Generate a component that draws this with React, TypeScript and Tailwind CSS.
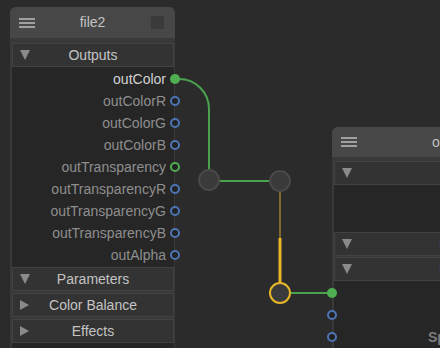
import React from 'react';

const font = { fontFamily: '"Liberation Sans", Arial, sans-serif' };

type Port = { name: string; kind: 'filled' | 'ring'; color: 'green' | 'blue'; bright?: boolean };

const outputs: Port[] = [
    { name: 'outColor', kind: 'filled', color: 'green', bright: true },
    { name: 'outColorR', kind: 'ring', color: 'blue' },
    { name: 'outColorG', kind: 'ring', color: 'blue' },
    { name: 'outColorB', kind: 'ring', color: 'blue' },
    { name: 'outTransparency', kind: 'ring', color: 'green' },
    { name: 'outTransparencyR', kind: 'ring', color: 'blue' },
    { name: 'outTransparencyG', kind: 'ring', color: 'blue' },
    { name: 'outTransparencyB', kind: 'ring', color: 'blue' },
    { name: 'outAlpha', kind: 'ring', color: 'blue' },
];

const Dot: React.FC<{ port: Port; className: string }> = ({ port, className }) => {
    const ring = port.color === 'green' ? 'border-[#4fae52]' : 'border-[#4d74b4]';
    const fill = port.color === 'green' ? 'bg-[#4fae52]' : 'bg-[#4d74b4]';
    return (
        <span
            className={`absolute top-1/2 -translate-y-1/2 w-[10px] h-[10px] rounded-full ${className} ${port.kind === 'filled' ? fill : `border-2 ${ring} bg-[#222]`}`}
        />
    );
};

const Hamburger = () => (
    <div className="flex flex-col gap-[2px] w-[16px]">
        <span className="h-[2px] bg-[#a0a0a0]" />
        <span className="h-[2px] bg-[#a0a0a0]" />
        <span className="h-[2px] bg-[#a0a0a0]" />
    </div>
);

const Down = () => (
    <span className="w-0 h-0 border-l-[5px] border-r-[5px] border-t-[10px] border-l-transparent border-r-transparent border-t-[#8a8a8a]" />
);

const Right = () => (
    <span className="w-0 h-0 border-t-[5px] border-b-[5px] border-l-[9px] border-t-transparent border-b-transparent border-l-[#8a8a8a]" />
);

const Section: React.FC<{ label?: string; open?: boolean; center?: boolean; labelLeft?: number; top?: string }> = ({ label, open = true, center = true, labelLeft, top = '' }) => (
    <div className={`relative h-[24px] ${top} flex items-center pl-[7px] bg-[#333333] border border-[#424242] text-[14px] text-[#c4c4c4]`}>
        {open ? <Down /> : <Right />}
        {center && label && <span className="absolute inset-0 flex items-center justify-center">{label}</span>}
        {!center && label && (
            <span className="absolute top-0 bottom-0 flex items-center" style={{ left: labelLeft }}>
                {label}
            </span>
        )}
    </div>
);

export default function App() {
    return (
        <div className="relative w-[440px] h-[348px] overflow-hidden bg-[#2b2b2b]" style={font}>
            <svg className="absolute inset-0" width="440" height="348">
                <path d="M174 79 H179 A30 30 0 0 1 209 109 V170" fill="none" stroke="#4aa24f" strokeWidth="2" />
                <line x1="219" y1="181" x2="270" y2="181" stroke="#4aa24f" strokeWidth="2" />
                <line x1="280" y1="191" x2="280" y2="238" stroke="#7d6a33" strokeWidth="2" />
                <line x1="280" y1="238" x2="280" y2="283" stroke="#e6b52a" strokeWidth="3" />
                <line x1="291" y1="293" x2="333" y2="293" stroke="#4aa24f" strokeWidth="2" />
                <circle cx="209" cy="180" r="10" fill="#3a3a3a" stroke="#484848" strokeWidth="2" />
                <circle cx="280" cy="181" r="10" fill="#3a3a3a" stroke="#484848" strokeWidth="2" />
                <circle cx="280" cy="293" r="10" fill="#3a3a3a" stroke="#e6b52a" strokeWidth="2" />
            </svg>

            {/* node 1 */}
            <div className="absolute left-[10px] top-[7px] w-[165px] h-[360px] rounded-t-[6px] bg-[#393939] flex flex-col">
                <div className="h-[31px] shrink-0 rounded-t-[6px] bg-[#474747] flex items-center px-[9px] relative">
                    <Hamburger />
                    <span className="absolute inset-0 flex items-center justify-center text-[14px] text-[#c2c2c2]">file2</span>
                    <span className="ml-auto w-[13px] h-[13px] bg-[#3a3a3a] mr-[2px]" />
                </div>
                <div className="flex-1 flex flex-col pt-[5px] px-[2px] pr-px">
                    <Section label="Outputs" />
                    <div className="bg-[#262626] flex flex-col pt-[1px] pb-[1px]">
                        {outputs.map((p) => (
                            <div key={p.name} className="relative h-[22px] flex items-center justify-end pr-[8px] text-[14px]">
                                <span className={p.bright ? 'text-[#d2d2d2]' : 'text-[#8e8e8e]'}>{p.name}</span>
                                <Dot port={p} className="right-[-6px]" />
                            </div>
                        ))}
                    </div>
                    <Section label="Parameters" />
                    <Section label="Color Balance" open={false} top="mt-[2px]" />
                    <Section label="Effects" open={false} top="mt-[2px]" />
                    <div className="flex-1 bg-[#262626]" />
                </div>
            </div>

            {/* node 2 */}
            <div className="absolute left-[332px] top-[127px] w-[200px] h-[240px] rounded-tl-[6px] bg-[#393939] flex flex-col">
                <div className="h-[30px] shrink-0 rounded-tl-[6px] bg-[#474747] flex items-center px-[9px] relative">
                    <Hamburger />
                    <span className="absolute top-0 bottom-0 left-[100px] flex items-center text-[14px] text-[#c2c2c2]">output</span>
                </div>
                <div className="flex-1 flex flex-col pt-[4px] pl-[2px]">
                    <Section />
                    <div className="h-[47px] bg-[#262626]" />
                    <Section label="Inputs" center={false} labelLeft={104} />
                    <Section label="Inputs" center={false} labelLeft={104} top="mt-[1px]" />
                    <div className="flex-1 bg-[#262626] relative pt-[1px]">
                        <div className="relative h-[22px]">
                            <Dot port={{ name: 'a', kind: 'filled', color: 'green' }} className="left-[-7px]" />
                        </div>
                        <div className="relative h-[22px]">
                            <Dot port={{ name: 'b', kind: 'ring', color: 'blue' }} className="left-[-7px]" />
                        </div>
                        <div className="relative h-[22px] flex items-center pl-[94px] text-[14px] font-bold text-[#7c7c7c]">
                            <Dot port={{ name: 'c', kind: 'ring', color: 'blue' }} className="left-[-7px]" />
                            <span>Specular</span>
                        </div>
                    </div>
                </div>
            </div>
        </div>
    );
}
